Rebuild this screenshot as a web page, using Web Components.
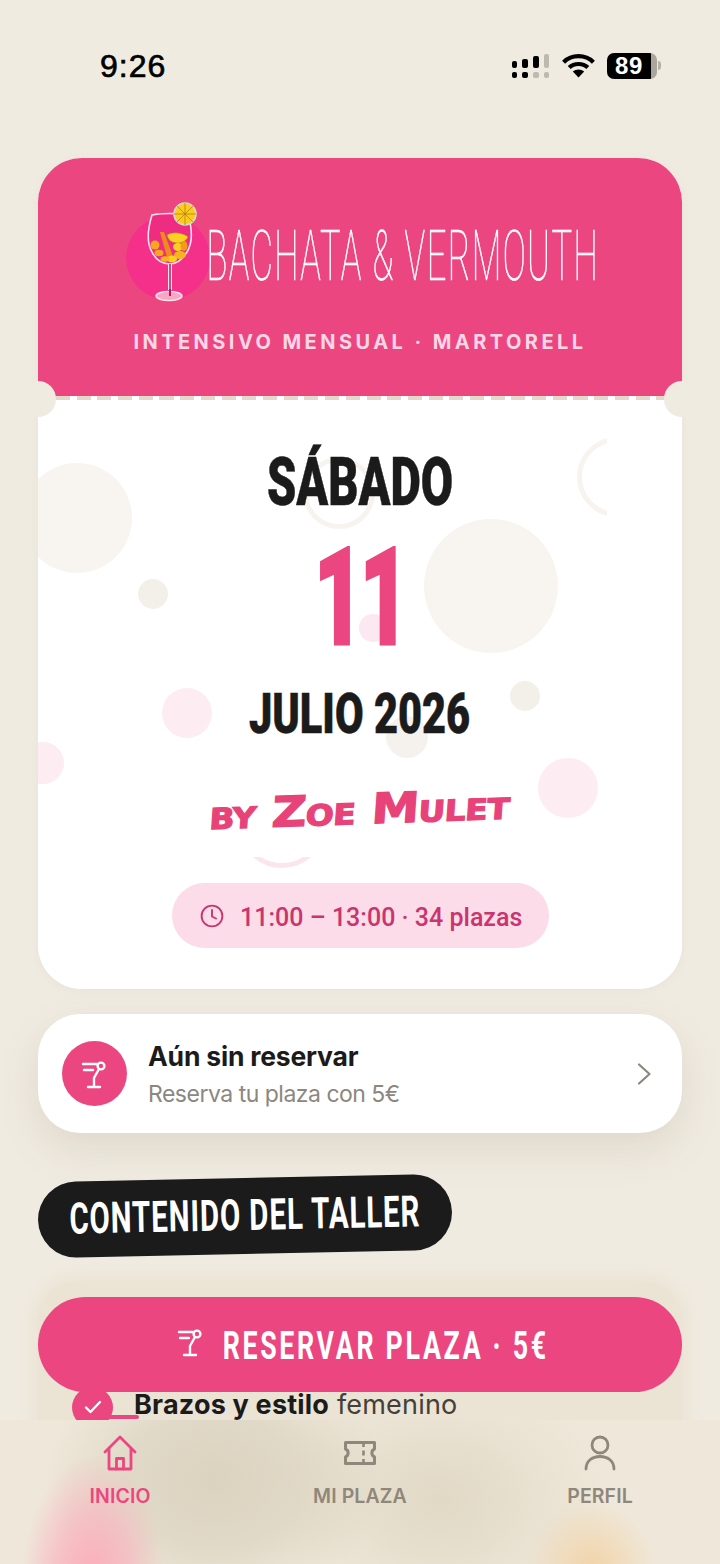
<!DOCTYPE html>
<html lang="es">
<head>
<meta charset="utf-8">
<title>Bachata & Vermouth</title>
<style>
  html, body { margin: 0; height: 1564px; overflow: hidden; background: #f0ebe1; }
  body { font-family: "Inter", "Liberation Sans", sans-serif; }
</style>
</head>
<body>
<app-screen>
  <status-bar slot="status"></status-bar>
  <ticket-card>
    <ticket-head slot="head"></ticket-head>
    <ticket-date></ticket-date>
  </ticket-card>
  <booking-row title="Aún sin reservar" sub="Reserva tu plaza con 5€"></booking-row>
  <section-tag>CONTENIDO DEL TALLER</section-tag>
  <course-list>
    <course-item><b>Brazos y estilo</b> femenino</course-item>
  </course-list>
</app-screen>
<cta-button>RESERVAR PLAZA · 5€</cta-button>
<tab-bar></tab-bar>

<script>
// cocktail glass shared by the booking row and the big button
const glassIcon = `
  <svg width="40" height="40" viewBox="0 0 40 40" fill="none" stroke="#fff" stroke-width="2.4" stroke-linecap="round">
    <path d="M8 10H22M9 16H18M24 15L19 24V33M13 33H25"/>
    <circle cx="26" cy="12" r="3.4"/>
  </svg>`;

// Horizontally squeezed text, stands in for the condensed display fonts.
class SqueezeText extends HTMLElement {
  constructor() {
    super();
    const shadow = this.attachShadow({mode: "open"});
    shadow.innerHTML = `
      <style>
        :host { display: flex; justify-content: center; white-space: nowrap; }
        span { flex: none; display: block; transform: scaleX(var(--sx, 1)); }
      </style>
      <span><slot></slot></span>`;
  }
}

class AppScreen extends HTMLElement {
  constructor() {
    super();
    const shadow = this.attachShadow({mode: "open"});
    shadow.innerHTML = `
      <style>
        :host { display: block; height: 1564px; overflow: hidden; }
        #content { display: flex; flex-direction: column; padding: 0 38px; }
      </style>
      <slot name="status"></slot>
      <div id="content"><slot></slot></div>`;
  }
}

class StatusBar extends HTMLElement {
  constructor() {
    super();
    const shadow = this.attachShadow({mode: "open"});
    shadow.innerHTML = `
      <style>
        :host { display: flex; justify-content: space-between; align-items: center; height: 158px; box-sizing: border-box; padding: 0 59px 27px 100px; color: #000; }
        #time { font: 400 32px/1 "Liberation Sans", sans-serif; letter-spacing: 1px; -webkit-text-stroke: .7px #000; }
        #icons { display: flex; align-items: center; gap: 12px; }
        #batt { display: flex; align-items: center; }
        #cell { width: 50px; height: 26px; background: linear-gradient(90deg, #000 44px, #aaa69d 44px); border-radius: 7px; display: flex; align-items: center; justify-content: center; padding-right: 6px; box-sizing: border-box; color: #fff; font: 700 24px/1 "Liberation Sans", sans-serif; letter-spacing: .6px; }
        #nub { width: 3px; height: 9px; background: #b5b1a8; border-radius: 0 3px 3px 0; margin-left: 1px; }
        svg { display: block; }
      </style>
      <div id="time">9:26</div>
      <div id="icons">
        <svg width="39" height="26" viewBox="0 0 39 26">
          <g fill="#000">
            <rect x="1" y="8" width="5" height="7" rx="2"/><rect x="11" y="6" width="6" height="9" rx="2"/><rect x="22" y="3" width="6" height="12" rx="2"/>
            <rect x="1" y="19" width="5" height="6" rx="2"/><rect x="11" y="19" width="6" height="6" rx="2"/>
          </g>
          <g fill="#bdb9b0">
            <rect x="33" y="1" width="5" height="14" rx="2"/><rect x="22" y="19" width="6" height="6" rx="2"/><rect x="33" y="19" width="5" height="6" rx="2"/>
          </g>
        </svg>
        <svg width="33" height="25" viewBox="0 0 33 25" fill="none" stroke="#000" stroke-width="4.2">
          <path d="M1.6 9.2C9.6 1.2 23.4 1.2 31.4 9.2"/>
          <path d="M7.2 14.6C12.2 9.8 20.8 9.8 25.8 14.6"/>
          <path d="M16.5 24.5L10.8 18.6C14 15.8 19 15.8 22.2 18.6Z" fill="#000" stroke="none"/>
        </svg>
        <div id="batt"><div id="cell">89</div><div id="nub"></div></div>
      </div>`;
  }
}

class TicketCard extends HTMLElement {
  constructor() {
    super();
    const shadow = this.attachShadow({mode: "open"});
    shadow.innerHTML = `
      <style>
        :host { display: block; position: relative; border-radius: 44px; box-shadow: 0 2px 10px rgba(120,105,80,.06); }
        #clip { background: #fff; border-radius: 44px; overflow: hidden; }
        .notch { position: absolute; top: 223px; width: 36px; height: 36px; border-radius: 50%; background: #f0ebe1; }
        #l { left: -18px; }
        #r { right: -18px; }
      </style>
      <div id="clip">
        <slot name="head"></slot>
        <slot></slot>
      </div>
      <div class="notch" id="l"></div>
      <div class="notch" id="r"></div>`;
  }
}

class TicketHead extends HTMLElement {
  constructor() {
    super();
    const shadow = this.attachShadow({mode: "open"});
    shadow.innerHTML = `
      <style>
        :host { display: block; position: relative; height: 242px; box-sizing: border-box; padding-top: 44px; background: linear-gradient(#ec4680 238px, #fff 238px); }
        #logo { display: flex; align-items: flex-start; height: 130px; padding-left: 82px; box-sizing: border-box; }
        #logo svg { flex: none; display: block; margin-top: -2px; }
        #name { width: 387px; margin: 18px 0 0 -11px; --sx: .485; font: 100 71px/1 "Roboto", sans-serif; letter-spacing: 3px; color: #fff; -webkit-text-stroke: .7px #fff; }
        #sub { text-align: center; margin-top: 0; font: 700 20px/1 "Inter", sans-serif; letter-spacing: 3.45px; color: #fcd6e6; }
        #dash { position: absolute; left: 0; right: 0; bottom: 0; height: 4px; background: repeating-linear-gradient(90deg, #e3dacb 0 14px, #fff 14px 20.7px) 18px 0; }
      </style>
      <div id="logo">
        <svg width="100" height="110" viewBox="120 200 100 110">
          <circle cx="168" cy="258" r="42" fill="#f4308a"/>
          <path d="M152 215C162 213 178 213 188 215C192 228 193 242 187 252C182 260 176 264 170 264C163 264 156 260 152 252C146 242 148 228 152 215Z" fill="#ee2c82" stroke="#fde3ee" stroke-width="1.6"/>
          <path d="M170 264V290" stroke="#fde3ee" stroke-width="4"/>
          <path d="M170 264V290" stroke="#b82a60" stroke-width="1.6"/>
          <ellipse cx="169" cy="296" rx="13" ry="4.6" fill="#f9a5c4" stroke="#fde3ee" stroke-width="1.4"/>
          <path d="M170 289V296" stroke="#a3264f" stroke-width="2"/>
          <ellipse cx="155" cy="245" rx="4.5" ry="4.5" fill="#f6a71c"/>
          <ellipse cx="159" cy="253" rx="4.5" ry="3.2" fill="#f6a71c"/>
          <path d="M160 232L164 232L174 259L168 261Z" fill="#f08a18"/>
          <path d="M167 235C172 231 184 233 188 237C186 241 182 243 177 243C172 243 168 240 167 235Z" fill="#fbd023" stroke="#a87a10" stroke-width=".5"/>
          <ellipse cx="178" cy="247" rx="5" ry="4" fill="#fbd023"/>
          <ellipse cx="184" cy="246" rx="3.5" ry="5" fill="#f39a1a"/>
          <ellipse cx="180" cy="255" rx="6" ry="4" fill="#f8b41f"/>
          <ellipse cx="172" cy="259" rx="5" ry="3.4" fill="#fbd023"/>
          <ellipse cx="165" cy="259" rx="4.5" ry="2.8" fill="#f8b41f"/>
          <circle cx="185" cy="214" r="11" fill="#fbcb1e" stroke="#d9d9c8" stroke-width="1.6"/>
          <path d="M185 203V225M174 214H196M177 206L193 222M193 206L177 222" stroke="#a87a10" stroke-width=".7"/>
        </svg>
        <squeeze-text id="name">BACHATA &amp; VERMOUTH</squeeze-text>
      </div>
      <div id="sub">INTENSIVO MENSUAL · MARTORELL</div>
      <div id="dash"></div>`;
  }
}

class TicketDate extends HTMLElement {
  constructor() {
    super();
    const shadow = this.attachShadow({mode: "open"});
    // bubble coordinates are relative to the card body, they are free decoration
    const bubbles = [
      [39, 118, 55, "#f8f5f1"], [115, 194, 15, "#f3f0ea"], [453, 186, 67, "#f8f5f1"],
      [335, 228, 14, "#fce8f0"], [149, 313, 25, "#fdecf2"], [487, 296, 15, "#f3f0ea"],
      [369, 337, 21, "#f5f2ed"], [5, 363, 21, "#fdecf2"], [530, 388, 30, "#fdecf2"]
    ].map(([x, y, r, c]) => `<i style="left:${x - r}px;top:${y - r}px;width:${2 * r}px;height:${2 * r}px;background:${c}"></i>`).join("");
    shadow.innerHTML = `
      <style>
        :host { display: flex; flex-direction: column; align-items: center; position: relative; height: 589px; box-sizing: border-box; background: #fff; overflow: hidden; }
        #bubbles { position: absolute; left: 0; top: 0; width: 569px; height: 456px; overflow: hidden; }
        i { position: absolute; display: block; border-radius: 50%; }
        .ring { box-sizing: border-box; border: 5px solid #f7f4f0; background: none; }
        #arc { position: absolute; left: 200px; top: 457px; width: 90px; height: 11px; overflow: hidden; }
        #arc i { left: 0; bottom: 0; width: 88px; height: 88px; border: 5px solid #fbe6ef; box-sizing: border-box; }
        squeeze-text { position: relative; align-self: stretch; font-family: "Roboto", "Liberation Sans", sans-serif; font-weight: 900; color: #1b1b1b; line-height: 1; }
        #day { margin-top: 49px; font-size: 67px; --sx: .70; -webkit-text-stroke: .5px #1b1b1b; }
        #num { margin-top: 22px; font-size: 136px; --sx: .63; letter-spacing: -6px; color: #ec4680; line-height: 120px; -webkit-text-stroke: 3px #ec4680; }
        #month { margin-top: 29px; font-size: 55px; --sx: .755; -webkit-text-stroke: .5px #1b1b1b; }
        #by { position: relative; margin-top: 47px; font: 700 42px/1 "DejaVu Sans", sans-serif; font-variant: small-caps; color: #e84379; transform: rotate(-2deg) skewX(-6deg) scaleX(1.14); white-space: nowrap; -webkit-text-stroke: 1.2px #e84379; letter-spacing: -.5px; }
        #pill { position: absolute; left: 134px; top: 483px; width: 377px; height: 65px; border-radius: 33px; background: #fbdce8; display: flex; align-items: center; gap: 16px; box-sizing: border-box; padding-left: 28px; color: #c9356f; font: 500 25px/1 "Roboto", sans-serif; white-space: nowrap; }
        #pill span { margin-top: 3px; }
        svg { display: block; flex: none; }
      </style>
      <div id="bubbles">
        ${bubbles}
        <i class="ring" style="left:265px;top:57px;width:72px;height:72px"></i>
        <i class="ring" style="left:539px;top:37px;width:80px;height:80px"></i>
      </div>
      <div id="arc"><i></i></div>
      <squeeze-text id="day">SÁBADO</squeeze-text>
      <squeeze-text id="num">11</squeeze-text>
      <squeeze-text id="month">JULIO 2026</squeeze-text>
      <div id="by">by Zoe Mulet</div>
      <div id="pill">
        <svg width="24" height="24" viewBox="0 0 24 24" fill="none" stroke="#c9356f" stroke-width="1.9" stroke-linecap="round" stroke-linejoin="round">
          <circle cx="12" cy="12" r="10.4"/><path d="M12 6V12.5L16 14.5"/>
        </svg>
        <span>11:00 – 13:00 · 34 plazas</span>
      </div>`;
  }
}

class BookingRow extends HTMLElement {
  constructor() {
    super();
    const shadow = this.attachShadow({mode: "open"});
    shadow.innerHTML = `
      <style>
        :host { display: flex; align-items: center; margin-top: 25px; height: 119px; box-sizing: border-box; padding: 0 30px 0 24px; background: #fff; border-radius: 42px; box-shadow: 0 16px 40px rgba(110,95,65,.13); }
        #badge { flex: none; width: 65px; height: 65px; border-radius: 50%; background: #ec4680; display: flex; align-items: center; justify-content: center; }
        #txt { flex: 1; margin-left: 21px; margin-top: 2px; }
        #title { font: 700 26.5px/32px "Inter", sans-serif; color: #1b1b1b; letter-spacing: -.2px; }
        #sub { font: 400 23px/30px "Inter", sans-serif; color: #8c877f; letter-spacing: -.5px; margin-top: 7px; }
        svg { display: block; }
      </style>
      <div id="badge">${glassIcon}</div>
      <div id="txt"><div id="title">${this.getAttribute("title")}</div><div id="sub">${this.getAttribute("sub")}</div></div>
      <svg width="16" height="24" viewBox="0 0 16 24" fill="none" stroke="#8c877f" stroke-width="2.2" stroke-linecap="round" stroke-linejoin="round"><path d="M3 2.5L13.5 12L3 21.5"/></svg>`;
  }
}

class SectionTag extends HTMLElement {
  constructor() {
    super();
    const shadow = this.attachShadow({mode: "open"});
    shadow.innerHTML = `
      <style>
        :host { display: block; align-self: flex-start; margin-top: 45px; width: 414px; height: 76px; border-radius: 38px; background: #1b1b1b; transform: rotate(-1.2deg); color: #fff; }
        squeeze-text { --sx: .678; height: 76px; align-items: center; font: 700 43.5px/1 "Roboto", sans-serif; letter-spacing: 1.3px; }
      </style>
      <squeeze-text><slot></slot></squeeze-text>`;
  }
}

class CourseList extends HTMLElement {
  constructor() {
    super();
    const shadow = this.attachShadow({mode: "open"});
    shadow.innerHTML = `
      <style>
        :host { display: block; margin-top: 27px; height: 400px; box-sizing: border-box; padding: 105px 34px 0; background: #ebe3d4; border-radius: 40px; box-shadow: 0 0 18px 6px #ebe3d4; }
      </style>
      <slot></slot>`;
  }
}

class CourseItem extends HTMLElement {
  constructor() {
    super();
    const shadow = this.attachShadow({mode: "open"});
    shadow.innerHTML = `
      <style>
        :host { display: flex; align-items: center; height: 42px; color: #444039; font: 400 27px/42px "Inter", sans-serif; letter-spacing: .2px; position: relative; white-space: nowrap; }
        #check { flex: none; width: 41px; height: 41px; border-radius: 50%; background: #ec4680; display: flex; align-items: center; justify-content: center; margin-right: 21px; }
        #line { position: absolute; left: 33px; top: 29px; width: 34px; height: 4px; border-radius: 0 2px 2px 0; background: #ec4680; }
        span { margin-top: -4px; position: relative; }
        ::slotted(b) { color: #1b1b1b; font-weight: 700; }
        svg { display: block; }
      </style>
      <div id="check"><svg width="18" height="14" viewBox="0 0 18 14" fill="none" stroke="#fff" stroke-width="2.4" stroke-linecap="round" stroke-linejoin="round"><path d="M2 7.5L6.5 12L16 2"/></svg></div>
      <div id="line"></div>
      <span><slot></slot></span>`;
  }
}

class CtaButton extends HTMLElement {
  constructor() {
    super();
    const shadow = this.attachShadow({mode: "open"});
    shadow.innerHTML = `
      <style>
        :host { position: fixed; left: 38px; top: 1297px; width: 644px; height: 95px; border-radius: 48px; background: #ec4680; display: flex; align-items: center; justify-content: center; color: #fff; }
        svg { flex: none; margin-top: -5px; display: block; }
        squeeze-text { width: 326px; margin: 3px 0 0 12px; --sx: .686; font: 700 39px/1 "Roboto", sans-serif; letter-spacing: 3.9px; }
      </style>
      ${glassIcon}
      <squeeze-text><slot></slot></squeeze-text>`;
  }
}

class TabBar extends HTMLElement {
  constructor() {
    super();
    const shadow = this.attachShadow({mode: "open"});
    const tab = (label, icon, on) => `<div class="tab ${on ? "on" : ""}">${icon}<span>${label}</span></div>`;
    shadow.innerHTML = `
      <style>
        :host { position: fixed; left: 0; right: 0; bottom: 0; height: 144px; display: grid; grid-template-columns: repeat(3, 240px);
          background:
            radial-gradient(ellipse 72px 135px at 92px 170px, #fca8b6 0%, rgba(250,172,186,.6) 55%, rgba(249,178,189,0) 100%),
            radial-gradient(ellipse 65px 70px at 592px 150px, #f2d3a8 0%, rgba(242,211,168,0) 100%),
            radial-gradient(ellipse 170px 130px at 215px 60px, #dbd2bf 0%, rgba(219,210,191,.7) 50%, rgba(223,214,195,0) 100%),
            radial-gradient(ellipse 170px 130px at 440px 80px, #e1d8c5 0%, rgba(227,218,199,0) 100%),
            #efe8da; }
        .tab { display: flex; flex-direction: column; align-items: center; padding-top: 13px; color: #8f877a; font: 600 19.5px/1 "Inter", sans-serif; letter-spacing: .1px; }
        .tab svg { display: block; margin-bottom: 14px; }
        .tab span { white-space: nowrap; }
        .on { color: #ec4680; }
      </style>
      ${tab("INICIO", `<svg width="40" height="40" viewBox="0 0 40 40" fill="none" stroke="#ec4680" stroke-width="2.8" stroke-linejoin="round" stroke-linecap="round"><path d="M5 19L20 4L35 19"/><path d="M9 16V36H31V16"/><path d="M16.5 36V25.5H23.5V36"/></svg>`, true)}
      ${tab("MI PLAZA", `<svg width="40" height="40" viewBox="0 0 40 40" fill="none" stroke="#8f877a" stroke-width="3" stroke-linejoin="round"><path d="M5.5 9.5H34.5V16C31 17.5 31 22.5 34.5 24V30.5H5.5V24C9 22.5 9 17.5 5.5 16Z"/><path d="M23.5 10V14M23.5 17.5V22.5M23.5 26V30" stroke-width="2.6"/></svg>`)}
      ${tab("PERFIL", `<svg width="40" height="40" viewBox="0 0 40 40" fill="none" stroke="#8f877a" stroke-width="2.8" stroke-linecap="round"><circle cx="20" cy="12" r="8"/><path d="M6 36C6 28 12 23.5 20 23.5C28 23.5 34 28 34 36"/></svg>`)}`;
  }
}

customElements.define("squeeze-text", SqueezeText);
customElements.define("app-screen", AppScreen);
customElements.define("status-bar", StatusBar);
customElements.define("ticket-card", TicketCard);
customElements.define("ticket-head", TicketHead);
customElements.define("ticket-date", TicketDate);
customElements.define("booking-row", BookingRow);
customElements.define("section-tag", SectionTag);
customElements.define("course-list", CourseList);
customElements.define("course-item", CourseItem);
customElements.define("cta-button", CtaButton);
customElements.define("tab-bar", TabBar);
</script>
</body>
</html>
